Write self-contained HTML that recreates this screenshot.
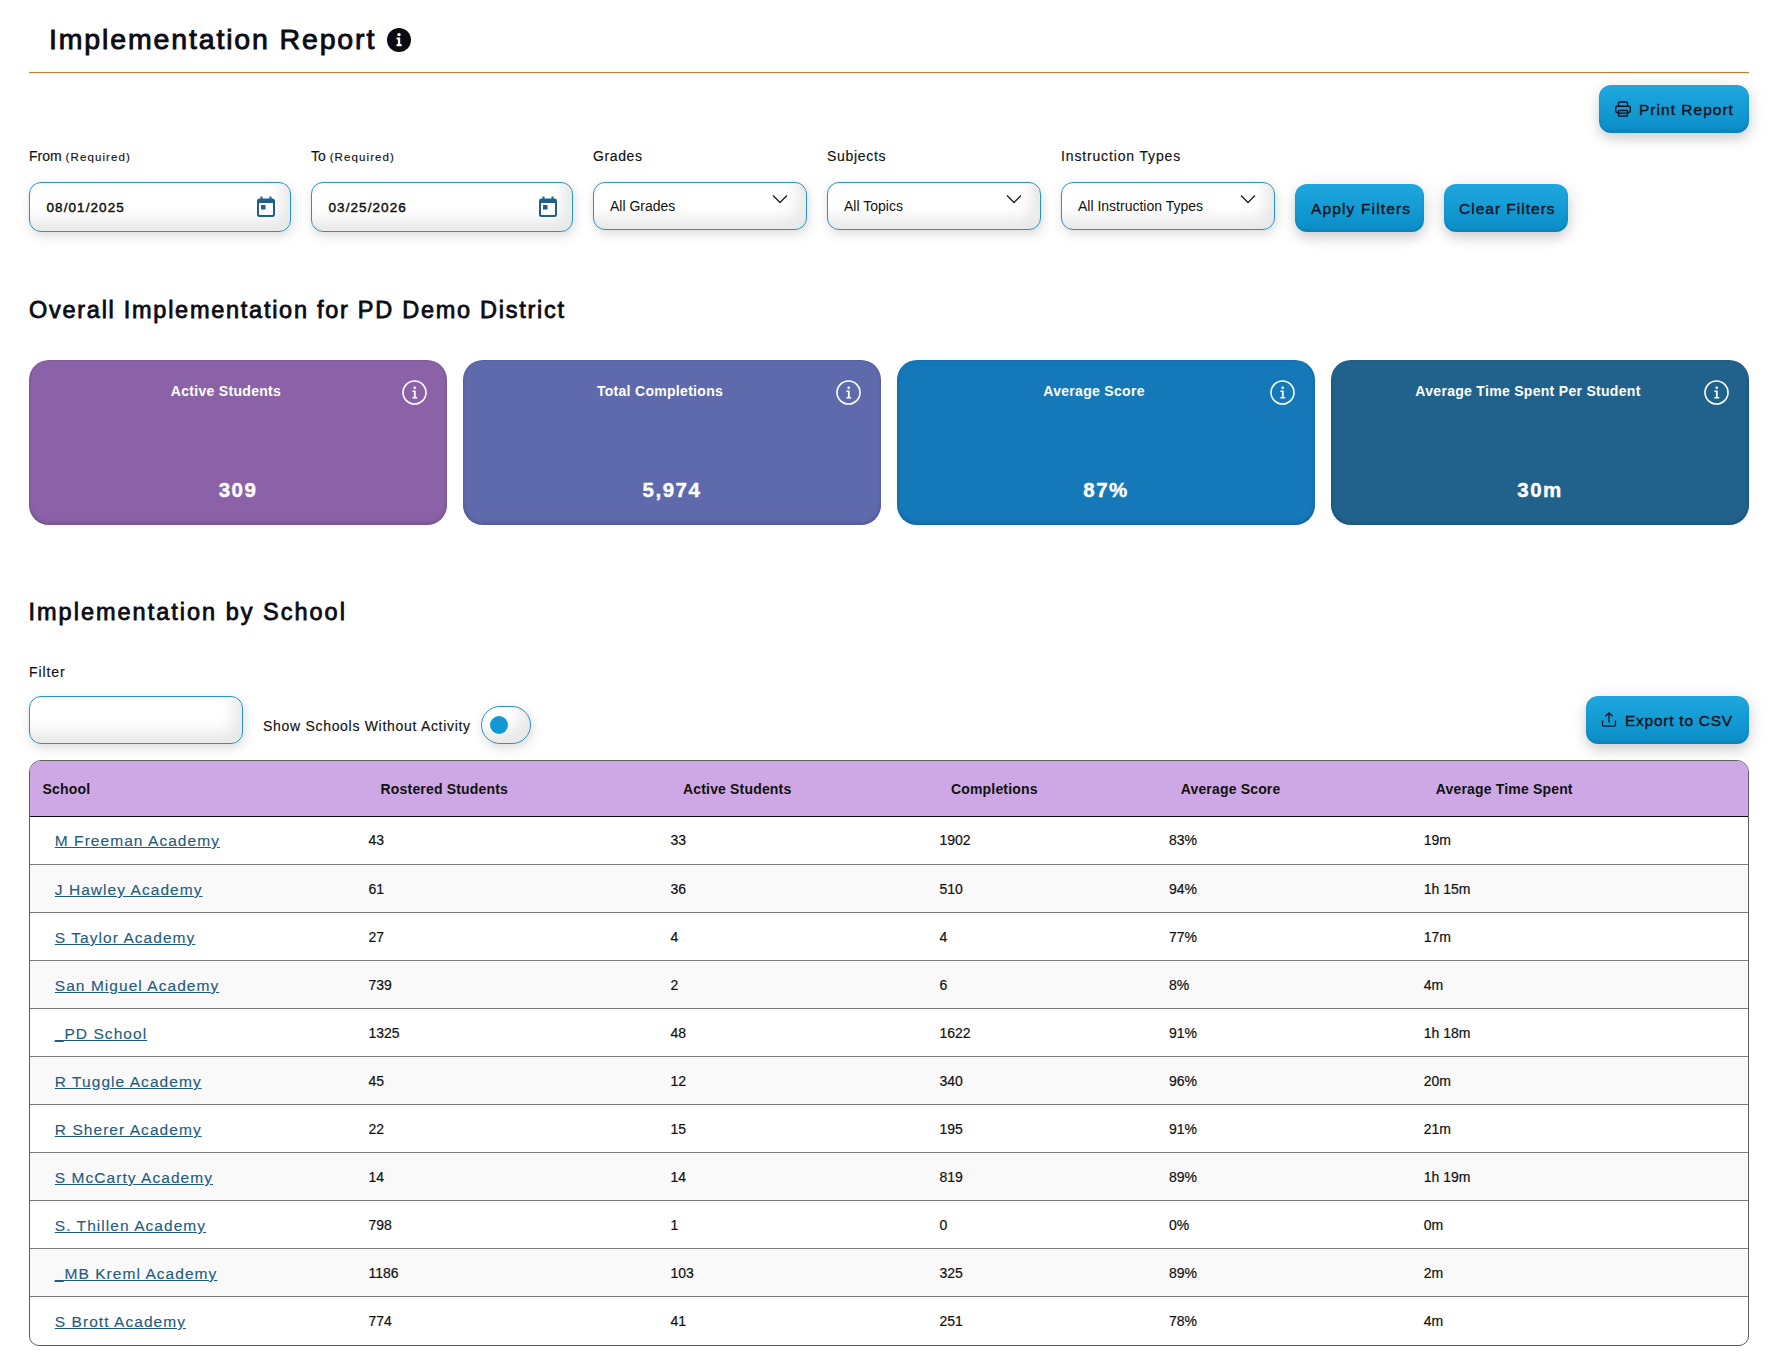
<!DOCTYPE html>
<html><head><meta charset="utf-8">
<style>
*{box-sizing:border-box;margin:0;padding:0}
html,body{width:1787px;height:1369px;background:#fff;overflow:hidden}
body{font-family:"Liberation Sans",sans-serif;color:#111;position:relative}
.a{position:absolute;white-space:nowrap;line-height:1}
.title{left:49px;top:25px;font-size:28.5px;font-weight:400;letter-spacing:1.85px;color:#0b0b14;-webkit-text-stroke:0.9px #0b0b14}
.hinfo{left:387px;top:28px;width:24px;height:24px;border-radius:50%;background:#0b0b14}
.gold{left:29px;top:71px;width:1720px;height:3px;background:linear-gradient(#fbf5d2 0 33%,#b3853f 33% 67%,#f3ead6 67%)}
.btn{position:absolute;border-radius:12px;background:linear-gradient(180deg,#1fa7de 0%,#139ad3 55%,#0b8cc5 100%);
 box-shadow:0 6px 12px rgba(0,0,0,0.14), 2px 2px 22px rgba(0,0,0,0.08), inset 0 -2px 3px rgba(0,40,80,0.12);}
.btn span{position:absolute;line-height:1;white-space:nowrap;font-size:15.5px;color:#14141f;letter-spacing:0.5px;-webkit-text-stroke:0.4px #14141f}
.lbl{font-size:14px;color:#111;top:148.5px;-webkit-text-stroke:0.15px #111}
.req{font-size:11.5px;letter-spacing:1.1px}
.inp{position:absolute;border:1.5px solid #2693c4;border-radius:12px;background:#fff;
 box-shadow:2px 5px 12px rgba(0,0,0,0.11), 0 0 8px rgba(0,0,0,0.05), inset -9px -11px 14px rgba(0,0,0,0.09);}
.inp .t{position:absolute;line-height:1;white-space:nowrap}
.date .t{font-size:13.5px;letter-spacing:1.08px;left:16.5px;top:18px;color:#111;-webkit-text-stroke:0.45px #111}
.sel .t{font-size:14px;left:16px;top:16px;color:#111}
.chev{position:absolute;right:18px;top:10.5px;width:16px;height:10px}
.cal{position:absolute;left:227px;top:13px;width:18px;height:21px}
.h2{font-size:23.5px;font-weight:400;letter-spacing:1.73px;color:#0b0b14;-webkit-text-stroke:0.8px #0b0b14}
.card{position:absolute;top:360px;width:418px;height:165px;border-radius:20px;color:#fff;
 box-shadow:inset 0 -3px 4px rgba(0,0,0,0.10), inset 0 0 3px rgba(0,0,0,0.12)}
.card .ct{position:absolute;line-height:1;font-size:14px;font-weight:700;letter-spacing:0.3px;white-space:nowrap;text-align:center;width:394px;left:0;top:23.5px}
.card .cv{position:absolute;line-height:1;font-size:20.5px;font-weight:700;letter-spacing:1.5px;-webkit-text-stroke:0.4px #fff;white-space:nowrap;text-align:center;width:418px;left:0;top:120px}
.card .ci{position:absolute;right:20px;top:20px;width:25px;height:25px}
.tbl{position:absolute;left:29px;top:760px;width:1720px;height:586px;border:1px solid #5e5e5e;border-radius:12px 12px 10px 10px;overflow:hidden;background:#fff}
.thead{position:absolute;left:0;top:0;width:100%;height:56px;background:#cda8e5;border-bottom:1px solid #0b0810}
.th{position:absolute;top:21px;line-height:1;font-size:14px;font-weight:700;letter-spacing:0.17px;white-space:nowrap;color:#111}
.row{position:absolute;left:0;width:100%;height:48px;border-top:1px solid #7a7a7a}
.row.alt{background:#f9f9f9}
.td{position:absolute;line-height:1;font-size:14px;white-space:nowrap;color:#111;top:16.5px;-webkit-text-stroke:0.2px #111}
.r0 .td{top:15.5px}.r0 .lnk{top:16px}
.lnk{position:absolute;line-height:1;font-size:15.5px;letter-spacing:1.05px;white-space:nowrap;color:#235b80;-webkit-text-stroke:0.12px #235b80;text-decoration:underline;top:17px;left:25px}
</style></head><body>

<div class="a title">Implementation Report</div>
<div class="a hinfo"><svg width="24" height="24" viewBox="0 0 24 24"><circle cx="12" cy="6.6" r="1.7" fill="#fff"/><path d="M9.6 9.4h3.6v6.6h1.4v2.2H9.6v-2.2h1.3v-4.4H9.6z" fill="#fff"/></svg></div>
<div class="a gold"></div>

<div class="btn" style="left:1599px;top:85px;width:150px;height:48px">
 <svg style="position:absolute;left:15px;top:15px" width="18" height="18" viewBox="0 0 18 18" fill="none" stroke="#14141f" stroke-width="1.4"><path d="M4.5 6V3.2Q4.5 2 5.7 2h6.6q1.2 0 1.2 1.2V6"/><rect x="1.7" y="6.2" width="14.6" height="6.3" rx="1.5"/><rect x="4.5" y="10.5" width="9" height="5.5" rx="0.8" fill="#139ad3"/><path d="M4.5 13.2h9"/></svg>
 <span style="left:40px;top:17.2px;letter-spacing:1.02px">Print Report</span>
</div>

<div class="a lbl" style="left:29px">From <span class="req">(Required)</span></div>
<div class="a lbl" style="left:311px">To <span class="req">(Required)</span></div>
<div class="a lbl" style="left:593px;letter-spacing:0.6px">Grades</div>
<div class="a lbl" style="left:827px;letter-spacing:0.7px">Subjects</div>
<div class="a lbl" style="left:1061px;letter-spacing:0.85px">Instruction Types</div>

<div class="inp date" style="left:29px;top:182px;width:262px;height:50px"><div class="t">08/01/2025</div>
 <svg class="cal" viewBox="0 0 18 21"><path fill="#1f5f8b" d="M3.5 0.5h2v2h7v-2h2v2h0.8Q18 2.5 18 5v13.5Q18 21 15.5 21h-13Q0 21 0 18.5V5Q0 2.5 2.5 2.5h1z M2 7v11.3q0 0.7 0.7 0.7h12.6q0.7 0 0.7-0.7V7z M4 9h4.5v4.5H4z"/></svg></div>
<div class="inp date" style="left:311px;top:182px;width:262px;height:50px"><div class="t">03/25/2026</div>
 <svg class="cal" viewBox="0 0 18 21"><path fill="#1f5f8b" d="M3.5 0.5h2v2h7v-2h2v2h0.8Q18 2.5 18 5v13.5Q18 21 15.5 21h-13Q0 21 0 18.5V5Q0 2.5 2.5 2.5h1z M2 7v11.3q0 0.7 0.7 0.7h12.6q0.7 0 0.7-0.7V7z M4 9h4.5v4.5H4z"/></svg></div>

<div class="inp sel" style="left:593px;top:182px;width:214px;height:48px"><div class="t">All Grades</div>
 <svg class="chev" viewBox="0 0 16 10"><path d="M1 1.5l7 7 7-7" fill="none" stroke="#222" stroke-width="1.4"/></svg></div>
<div class="inp sel" style="left:827px;top:182px;width:214px;height:48px"><div class="t">All Topics</div>
 <svg class="chev" viewBox="0 0 16 10"><path d="M1 1.5l7 7 7-7" fill="none" stroke="#222" stroke-width="1.4"/></svg></div>
<div class="inp sel" style="left:1061px;top:182px;width:214px;height:48px"><div class="t">All Instruction Types</div>
 <svg class="chev" viewBox="0 0 16 10"><path d="M1 1.5l7 7 7-7" fill="none" stroke="#222" stroke-width="1.4"/></svg></div>

<div class="btn" style="left:1295px;top:184px;width:129px;height:48px"><span style="left:16px;top:17.2px;letter-spacing:1.15px">Apply Filters</span></div>
<div class="btn" style="left:1444px;top:184px;width:124px;height:48px"><span style="left:15px;top:17.2px;letter-spacing:1.0px">Clear Filters</span></div>

<div class="a h2" style="left:29px;top:299px">Overall Implementation for PD Demo District</div>

<div class="card" style="left:29px;background:#8b62a7"><div class="ct">Active Students</div><div class="cv">309</div>
 <svg class="ci" viewBox="0 0 25 25"><circle cx="12.5" cy="12.5" r="11.5" fill="none" stroke="#fff" stroke-width="1.6"/><circle cx="12.7" cy="7.8" r="1.3" fill="#fff"/><path d="M10.4 10.6h3.3v6.4h1.5v1.5h-4.8V17h1.5v-4.9h-1.5z" fill="#fff"/></svg></div>
<div class="card" style="left:463px;background:#5f6aad"><div class="ct">Total Completions</div><div class="cv">5,974</div>
 <svg class="ci" viewBox="0 0 25 25"><circle cx="12.5" cy="12.5" r="11.5" fill="none" stroke="#fff" stroke-width="1.6"/><circle cx="12.7" cy="7.8" r="1.3" fill="#fff"/><path d="M10.4 10.6h3.3v6.4h1.5v1.5h-4.8V17h1.5v-4.9h-1.5z" fill="#fff"/></svg></div>
<div class="card" style="left:897px;background:#1578b9"><div class="ct">Average Score</div><div class="cv">87%</div>
 <svg class="ci" viewBox="0 0 25 25"><circle cx="12.5" cy="12.5" r="11.5" fill="none" stroke="#fff" stroke-width="1.6"/><circle cx="12.7" cy="7.8" r="1.3" fill="#fff"/><path d="M10.4 10.6h3.3v6.4h1.5v1.5h-4.8V17h1.5v-4.9h-1.5z" fill="#fff"/></svg></div>
<div class="card" style="left:1331px;background:#21628c"><div class="ct">Average Time Spent Per Student</div><div class="cv">30m</div>
 <svg class="ci" viewBox="0 0 25 25"><circle cx="12.5" cy="12.5" r="11.5" fill="none" stroke="#fff" stroke-width="1.6"/><circle cx="12.7" cy="7.8" r="1.3" fill="#fff"/><path d="M10.4 10.6h3.3v6.4h1.5v1.5h-4.8V17h1.5v-4.9h-1.5z" fill="#fff"/></svg></div>

<div class="a h2" style="left:28.5px;top:600.5px;letter-spacing:2.0px">Implementation by School</div>
<div class="a lbl" style="left:29px;top:665px;letter-spacing:0.9px">Filter</div>
<div class="inp" style="left:29px;top:696px;width:214px;height:48px"></div>
<div class="a lbl" style="left:263px;top:719px;letter-spacing:0.7px">Show Schools Without Activity</div>
<div class="inp" style="left:481px;top:706px;width:50px;height:38px;border-radius:19px"><div style="position:absolute;left:8px;top:8.5px;width:18px;height:18px;border-radius:50%;background:#1199d6"></div></div>

<div class="btn" style="left:1586px;top:696px;width:163px;height:48px">
 <svg style="position:absolute;left:15px;top:15px" width="16" height="17" viewBox="0 0 16 17" fill="none" stroke="#14141f" stroke-width="1.3"><path d="M8 11.5V1.8M4.4 5.3L8 1.8l3.6 3.5M1.5 9.5v4.2q0 1.5 1.5 1.5h10q1.5 0 1.5-1.5V9.5"/></svg>
 <span style="left:39px;top:17.2px;letter-spacing:0.75px">Export to CSV</span>
</div>

<div class="tbl" id="tbl">
<div class="thead">
<div class="th" style="left:12.5px">School</div>
<div class="th" style="left:350.6px">Rostered Students</div>
<div class="th" style="left:653.0px">Active Students</div>
<div class="th" style="left:921.0px">Completions</div>
<div class="th" style="left:1150.7px">Average Score</div>
<div class="th" style="left:1405.8px">Average Time Spent</div>
</div>
<div class="row r0" style="top:56px;border-top:none;height:47px"><div class="lnk" style="left:24.8px">M Freeman Academy</div><div class="td" style="left:338.4px">43</div><div class="td" style="left:640.4px">33</div><div class="td" style="left:909.5px">1902</div><div class="td" style="left:1138.9px">83%</div><div class="td" style="left:1393.7px">19m</div></div>
<div class="row alt" style="top:103px"><div class="lnk" style="left:24.8px">J Hawley Academy</div><div class="td" style="left:338.4px">61</div><div class="td" style="left:640.4px">36</div><div class="td" style="left:909.5px">510</div><div class="td" style="left:1138.9px">94%</div><div class="td" style="left:1393.7px">1h 15m</div></div>
<div class="row" style="top:151px"><div class="lnk" style="left:24.8px">S Taylor Academy</div><div class="td" style="left:338.4px">27</div><div class="td" style="left:640.4px">4</div><div class="td" style="left:909.5px">4</div><div class="td" style="left:1138.9px">77%</div><div class="td" style="left:1393.7px">17m</div></div>
<div class="row alt" style="top:199px"><div class="lnk" style="left:24.8px">San Miguel Academy</div><div class="td" style="left:338.4px">739</div><div class="td" style="left:640.4px">2</div><div class="td" style="left:909.5px">6</div><div class="td" style="left:1138.9px">8%</div><div class="td" style="left:1393.7px">4m</div></div>
<div class="row" style="top:247px"><div class="lnk" style="left:24.8px">_PD School</div><div class="td" style="left:338.4px">1325</div><div class="td" style="left:640.4px">48</div><div class="td" style="left:909.5px">1622</div><div class="td" style="left:1138.9px">91%</div><div class="td" style="left:1393.7px">1h 18m</div></div>
<div class="row alt" style="top:295px"><div class="lnk" style="left:24.8px">R Tuggle Academy</div><div class="td" style="left:338.4px">45</div><div class="td" style="left:640.4px">12</div><div class="td" style="left:909.5px">340</div><div class="td" style="left:1138.9px">96%</div><div class="td" style="left:1393.7px">20m</div></div>
<div class="row" style="top:343px"><div class="lnk" style="left:24.8px">R Sherer Academy</div><div class="td" style="left:338.4px">22</div><div class="td" style="left:640.4px">15</div><div class="td" style="left:909.5px">195</div><div class="td" style="left:1138.9px">91%</div><div class="td" style="left:1393.7px">21m</div></div>
<div class="row alt" style="top:391px"><div class="lnk" style="left:24.8px">S McCarty Academy</div><div class="td" style="left:338.4px">14</div><div class="td" style="left:640.4px">14</div><div class="td" style="left:909.5px">819</div><div class="td" style="left:1138.9px">89%</div><div class="td" style="left:1393.7px">1h 19m</div></div>
<div class="row" style="top:439px"><div class="lnk" style="left:24.8px">S. Thillen Academy</div><div class="td" style="left:338.4px">798</div><div class="td" style="left:640.4px">1</div><div class="td" style="left:909.5px">0</div><div class="td" style="left:1138.9px">0%</div><div class="td" style="left:1393.7px">0m</div></div>
<div class="row alt" style="top:487px"><div class="lnk" style="left:24.8px">_MB Kreml Academy</div><div class="td" style="left:338.4px">1186</div><div class="td" style="left:640.4px">103</div><div class="td" style="left:909.5px">325</div><div class="td" style="left:1138.9px">89%</div><div class="td" style="left:1393.7px">2m</div></div>
<div class="row" style="top:535px"><div class="lnk" style="left:24.8px">S Brott Academy</div><div class="td" style="left:338.4px">774</div><div class="td" style="left:640.4px">41</div><div class="td" style="left:909.5px">251</div><div class="td" style="left:1138.9px">78%</div><div class="td" style="left:1393.7px">4m</div></div>
</div>

</body></html>
